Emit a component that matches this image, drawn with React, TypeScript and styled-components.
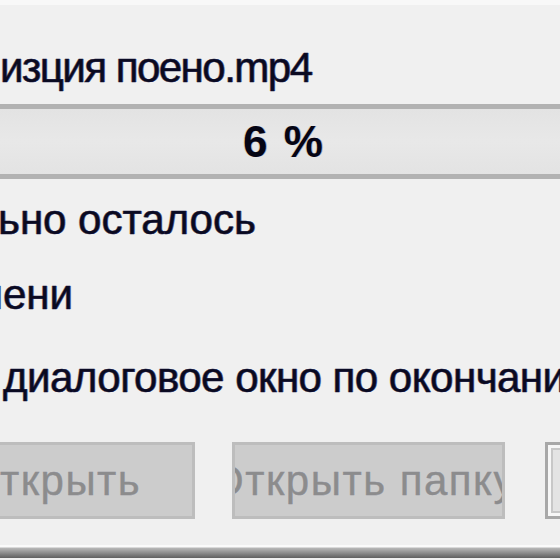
import React from "react";
import styled, { createGlobalStyle } from "styled-components";

const GlobalStyle = createGlobalStyle`
  html, body { margin: 0; padding: 0; background: #f0f0f0; }
  body { font-family: "Liberation Sans", Arial, sans-serif; }
`;

const Window = styled.div`
  width: 560px;
  height: 560px;
  overflow: hidden;
  display: flex;
  flex-direction: column;
  background: #f0f0f0;
  color: #000;
`;

const TopEdge = styled.div`
  height: 5px;
  flex: none;
  background: #f8f8f8;
`;

const Line = styled.div<{ $top: number; $left: number; $spacing?: number }>`
  height: 48px;
  line-height: 48px;
  flex: none;
  margin-top: ${(p) => p.$top}px;
  margin-left: ${(p) => p.$left}px;
  letter-spacing: ${(p) => p.$spacing ?? 0}px;
  font-size: 42px;
  white-space: nowrap;
  color: #0a0a1e;
  -webkit-text-stroke: 0.5px #10103a;
  text-shadow: 1px 0 0 rgba(0, 0, 110, 0.3), -1px 0 0 rgba(150, 110, 0, 0.22);
`;

const Progress = styled.div`
  flex: none;
  margin-top: 12px;
  margin-left: -40px;
  width: 648px;
  height: 65px;
  border-top: 5px solid #b2b2b2;
  border-bottom: 5px solid #b2b2b2;
  background: linear-gradient(#e3e3e3, #e8e8e8 50%, #e3e3e3);
  display: flex;
  align-items: center;
  justify-content: center;
  font-size: 44px;
  font-weight: bold;
  letter-spacing: 2px;
  color: #050514;
  text-shadow: 1px 0 0 rgba(0, 0, 110, 0.25), -1px 0 0 rgba(150, 110, 0, 0.2);
`;

const ButtonRow = styled.div`
  flex: none;
  display: flex;
  gap: 37px;
  margin-top: 40px;
  margin-left: -78px;
`;

const Button = styled.div<{ $primary?: boolean }>`
  flex: none;
  box-sizing: border-box;
  width: 273px;
  height: 77px;
  padding-right: 10px;
  display: flex;
  align-items: center;
  justify-content: center;
  overflow: hidden;
  white-space: nowrap;
  font-size: 42px;
  letter-spacing: 1.5px;
  color: #8c8c8c;
  -webkit-text-stroke: 0.4px #8c8c96;
  background: ${(p) => (p.$primary ? "#e4e4e4" : "#cccccc")};
  border: 3px solid ${(p) => (p.$primary ? "#a8a8a8" : "#bdbdbd")};
  box-shadow: ${(p) =>
    p.$primary ? "inset 0 0 0 3px #f7f7f7, inset 0 0 0 5px #c8c8c8" : "none"};
  margin-left: ${(p) => (p.$primary ? "3px" : "0")};
`;

const BottomEdge = styled.div`
  flex: none;
  margin-top: 26px;
  height: 13px;
  background: linear-gradient(#fafafa 0, #fafafa 2px, #b8b8b8 3px, #606060 100%);
`;

export default function App() {
  return (
    <>
      <GlobalStyle />
      <Window>
        <TopEdge />
        <Line $top={39} $left={0} $spacing={-1.5}>изция поено.mp4</Line>
        <Progress>6 %</Progress>
        <Line $top={17} $left={-2}>ьно осталось</Line>
        <Line $top={27} $left={-26}>мени</Line>
        <Line $top={35} $left={3} $spacing={-0.5}>диалоговое окно по окончании загрузки</Line>
        <ButtonRow>
          <Button>Открыть</Button>
          <Button>Открыть папку</Button>
          <Button $primary>Отмена</Button>
        </ButtonRow>
        <BottomEdge />
      </Window>
    </>
  );
}
